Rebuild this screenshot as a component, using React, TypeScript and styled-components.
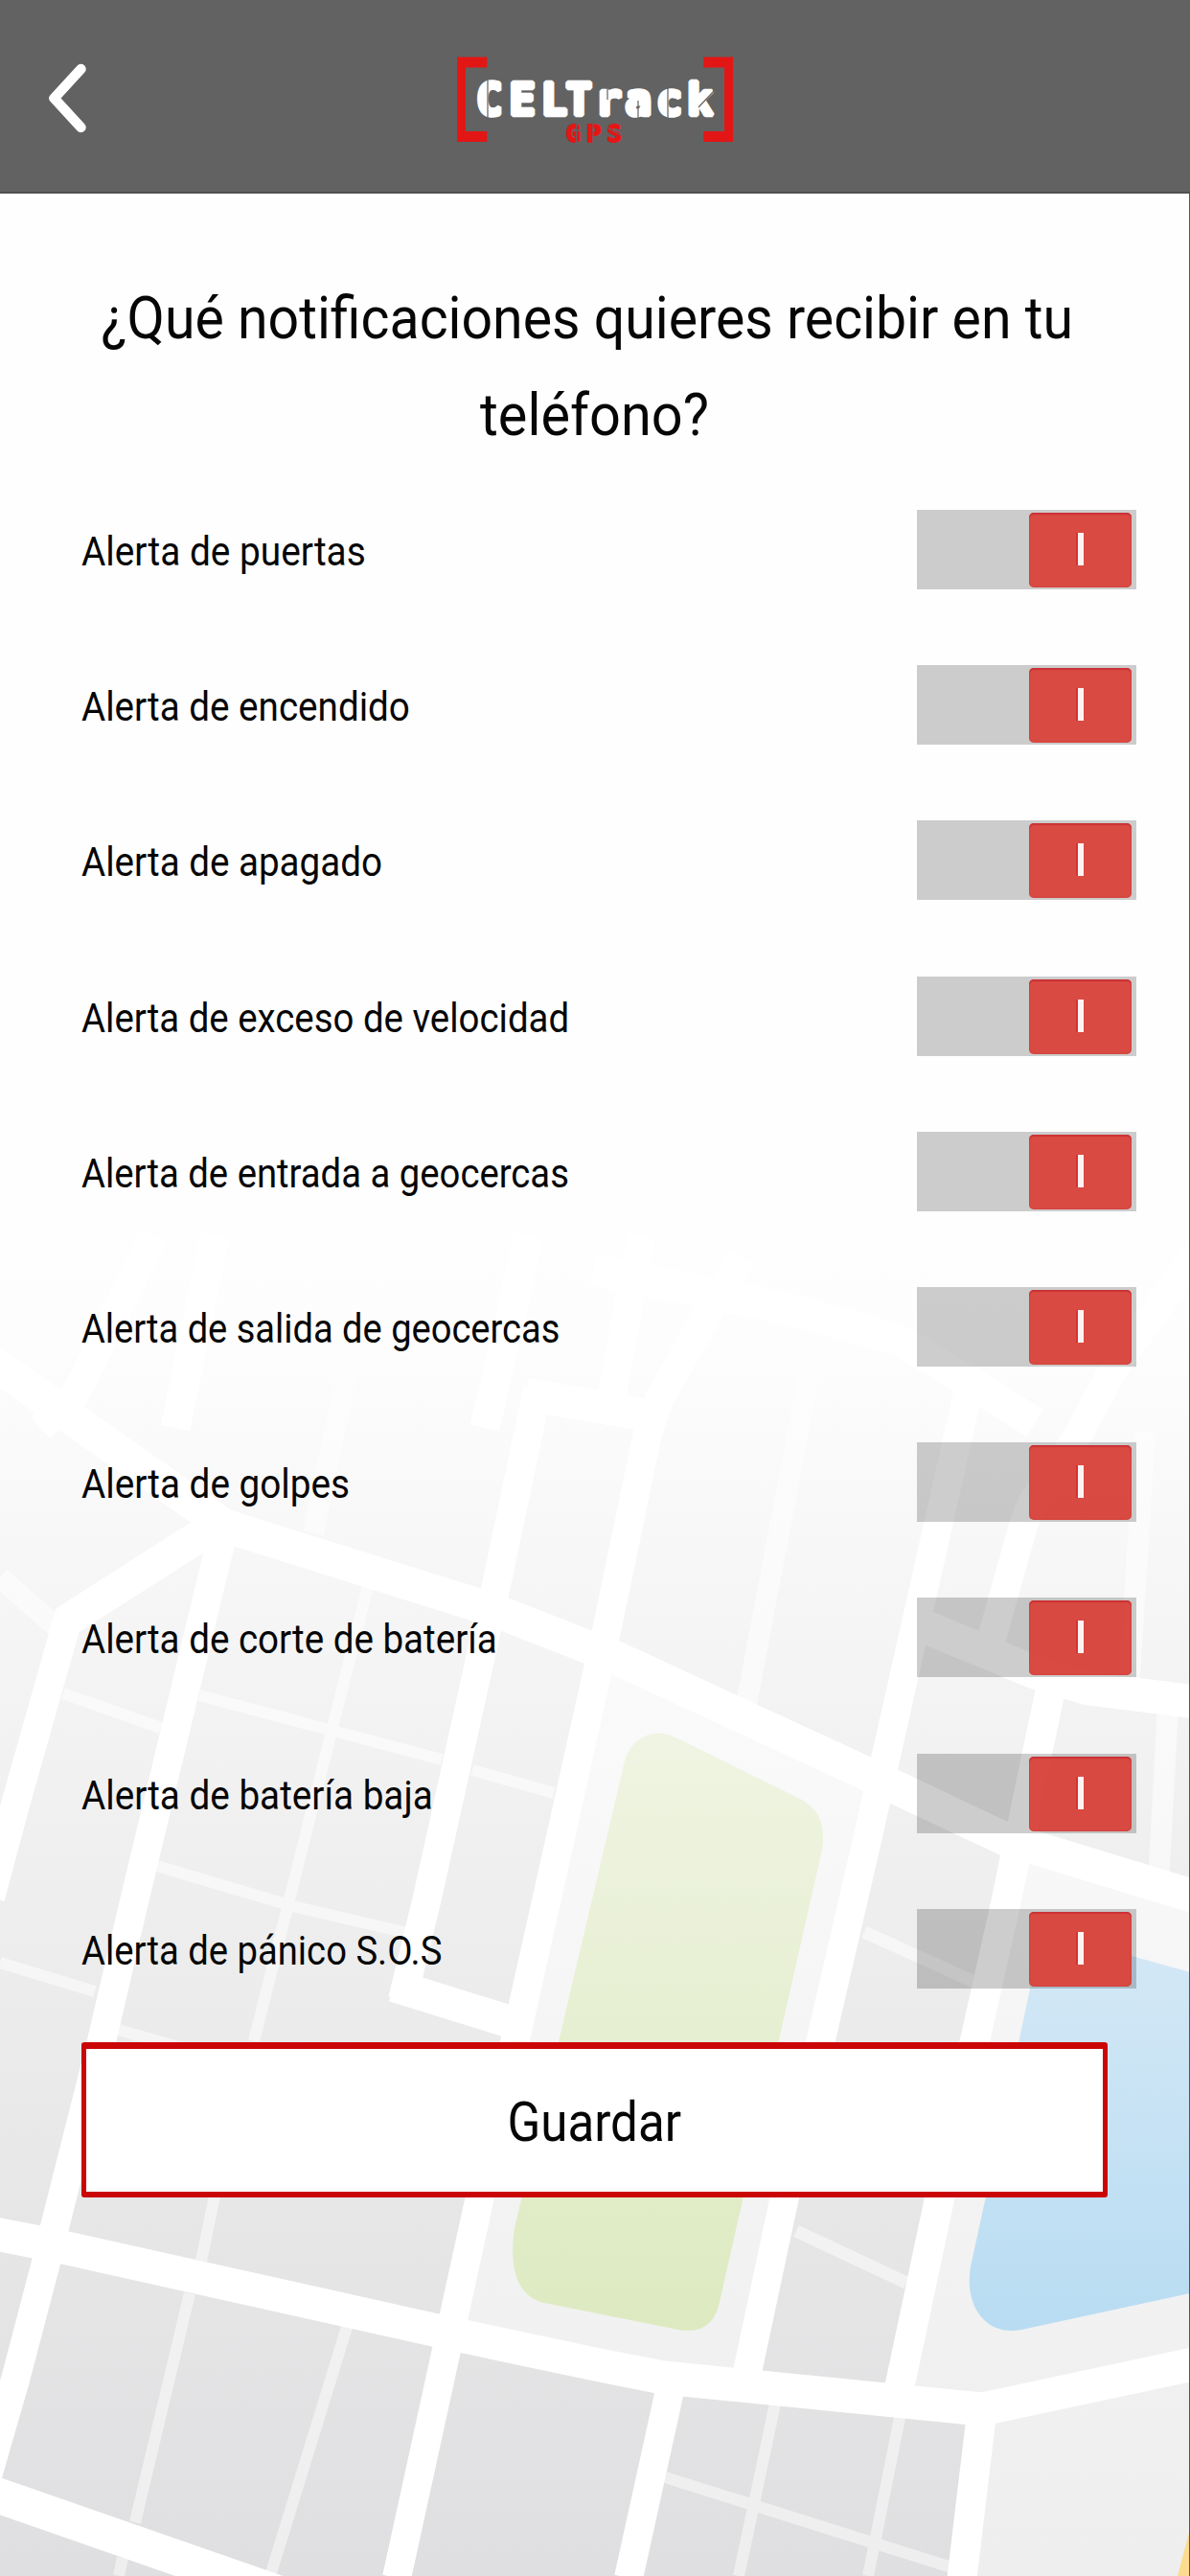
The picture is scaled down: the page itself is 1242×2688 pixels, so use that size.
import React, { useLayoutEffect, useRef, useState } from "react";
import styled, { createGlobalStyle } from "styled-components";

const GlobalStyle = createGlobalStyle`
  *, *::before, *::after { box-sizing: border-box; }
  html, body { margin: 0; padding: 0; background: #fff; }
  body { font-family: Roboto, "Open Sans", "Liberation Sans", sans-serif; color: #060606; }
`;

const Screen = styled.div`
  position: relative;
  width: 1242px;
  height: 2688px;
  overflow: hidden;
  background: #fefefe;
  display: flex;
  flex-direction: column;
`;

const MapBackdrop = styled.svg`
  position: absolute;
  inset: 0;
  width: 100%;
  height: 100%;
`;

const Header = styled.header`
  position: relative;
  flex: none;
  height: 202px;
  padding: 0 51px;
  display: grid;
  grid-template-columns: 60px 1fr 60px;
  align-items: center;
  background: #626262;
  border-bottom: 2px solid #505050;
`;

const BackButton = styled.button`
  width: 44px;
  height: 76px;
  margin-top: 6px;
  padding: 0;
  border: 0;
  background: none;
  display: flex;
`;

const Logo = styled.svg`
  justify-self: center;
  width: 290px;
  height: 112px;
  margin-top: 7px;
  overflow: visible;
`;

const Content = styled.main`
  position: relative;
  flex: 1;
  padding: 80px 55px 0 85px;
  border-right: 1px solid #555;
  display: flex;
  flex-direction: column;
`;

const Title = styled.h1`
  margin: 0 31px 0 0;
  height: 201px;
  font-size: 62px;
  font-weight: 400;
  line-height: 100.5px;
  display: flex;
  flex-direction: column;
  align-items: center;
`;

const TitleLine = styled.span<{ $trail?: number }>`
  padding-right: ${(p) => p.$trail ?? 0}px;
  white-space: nowrap;
`;

const List = styled.ul`
  list-style: none;
  margin: 49px 0 0;
  padding: 0;
`;

const Row = styled.li`
  height: 162.2px;
  display: flex;
  align-items: flex-start;
  justify-content: space-between;
`;

const RowLabel = styled.span`
  font-size: 43px;
  line-height: 86px;
  white-space: nowrap;
`;

const Fitted = styled.span<{ $origin: string }>`
  display: inline-block;
  white-space: nowrap;
  transform-origin: ${(p) => p.$origin} center;
`;

const Toggle = styled.button`
  width: 229px;
  height: 83px;
  padding: 3px 5px 2px 0;
  border: 0;
  display: flex;
  justify-content: flex-end;
  background: rgba(0, 0, 0, 0.197);
`;

const Thumb = styled.span`
  width: 107px;
  height: 78px;
  border-radius: 5px;
  background: rgba(217, 69, 61, 0.97);
  box-shadow: inset 0 2px 1px rgba(196, 38, 46, 0.65), inset 0 0 2px rgba(205, 60, 60, 0.8);
  display: flex;
  justify-content: center;
`;

const OnMark = styled.span`
  width: 6px;
  height: 34px;
  margin: 21px 0 0 1px;
  background: #fdf3f2;
  box-shadow: -2px 0 0 #d6322f;
`;

const SaveButton = styled.button`
  width: 1071px;
  height: 162px;
  margin: -23px 0 0;
  padding: 5px 0 0;
  border: solid #cb0606;
  border-width: 7px 5px 6px;
  border-radius: 3px;
  background: #fff;
  color: #060606;
  font: 400 57px Roboto, "Open Sans", sans-serif;
  display: flex;
  align-items: center;
  justify-content: center;
`;

type FitTextProps = { width: number; origin?: "left" | "center"; children: string };

/* Condenses a single line so that it spans the requested width. */
function FitText({ width, origin = "left", children }: FitTextProps) {
  const ref = useRef<HTMLSpanElement>(null);
  const [scale, setScale] = useState(1);
  useLayoutEffect(() => {
    if (ref.current) setScale(width / ref.current.offsetWidth);
  }, [width, children]);
  return (
    <Fitted ref={ref} $origin={origin} style={{ transform: `scaleX(${scale})` }}>
      {children}
    </Fitted>
  );
}

const alerts = [
  { label: "Alerta de puertas", width: 297 },
  { label: "Alerta de encendido", width: 343 },
  { label: "Alerta de apagado", width: 314 },
  { label: "Alerta de exceso de velocidad", width: 509 },
  { label: "Alerta de entrada a geocercas", width: 509 },
  { label: "Alerta de salida de geocercas", width: 499 },
  { label: "Alerta de golpes", width: 280 },
  { label: "Alerta de corte de batería", width: 434 },
  { label: "Alerta de batería baja", width: 367 },
  { label: "Alerta de pánico S.O.S", width: 376 },
];

const lanes: [string, number][] = [
  ["M66 1767L168 1803M208 1769L461 1836M493 1847L578 1871", 12],
  ["M384 1655L265 2130M224 2292L210 2359M198 2393L141 2632M128 2669L124 2688", 12],
  ["M164 1947L305 1989L430 2018M0 2048L99 2078M123 2118L190 2137", 12],
  ["M363 2425L282 2688", 12],
  ["M902 2016L1017 2068M831 2328L946 2382", 13],
  ["M809 2508L771 2688M940 2518L906 2688M694 2585L993 2679", 12],
  ["M0 1646L58 1697", 22],
  ["M366 1414L327 1600M853 1387L779 1778", 22],
  ["M1195 1494L1178 1765M1219 1780L1209 1965", 22],
];

const roads: [string, number][] = [
  ["M-10 1420L234 1592L515 1680L643 1730L905 1851L1047 1918L1250 1980", 35],
  ["M222 1594L67 1693", 34],
  ["M72 1685L16 1883L-10 1980", 30],
  ["M232 1602L141 1980L106 2130L57 2324L48 2361L16 2483L-14 2587", 30],
  ["M561 1450L515 1668L446 1980L420 2087", 30],
  ["M411 2072L540 2112", 34],
  ["M775 1312L748 1354L688 1460L676 1495L634 1697L571 1980L501 2292L466 2452L414 2690", 30],
  ["M669 1290L639 1455", 30],
  ["M549 1455L682 1478", 34],
  ["M620 1325L680 1337L819 1365L938 1398L1017 1445L1080 1485", 33],
  ["M1012 1445L905 1920L819 2292L780 2475", 30],
  ["M1262 1290L1163 1427L1122 1503L1076 1570L1068 1592L1032 1720", 30],
  ["M950 1691L1080 1745L1136 1762L1250 1776", 35],
  ["M1096 1765L1051 1980L981 2292L939 2490", 31],
  ["M-5 2331L57 2343L470 2435L621 2467L692 2481L1025 2514L1250 2466", 35],
  ["M-5 2603L400 2744", 37],
  ["M700 2490L656 2690", 30],
  ["M1025 2514L1004 2690", 31],
  ["M183 1490L224 1290M506 1490L552 1290", 31],
  ["M42 1490L79 1454L160 1290", 30],
];

function CityMap() {
  return (
    <MapBackdrop viewBox="0 0 1242 2688" aria-hidden="true">
      <defs>
        <linearGradient id="blocks" gradientUnits="userSpaceOnUse" x1="0" y1="1290" x2="0" y2="2688">
          <stop offset="0" stopColor="#fefefe" />
          <stop offset=".08" stopColor="#fdfdfd" />
          <stop offset=".16" stopColor="#fafafa" />
          <stop offset=".29" stopColor="#f5f5f5" />
          <stop offset=".5" stopColor="#eeeeee" />
          <stop offset=".75" stopColor="#e6e6e7" />
          <stop offset="1" stopColor="#dfdfe1" />
        </linearGradient>
        <linearGradient id="lots" gradientUnits="userSpaceOnUse" x1="0" y1="1290" x2="0" y2="2688">
          <stop offset="0" stopColor="#fefefe" />
          <stop offset=".4" stopColor="#f9f9f9" />
          <stop offset=".7" stopColor="#f3f3f3" />
          <stop offset="1" stopColor="#eeeeee" />
        </linearGradient>
        <linearGradient id="park" gradientUnits="userSpaceOnUse" x1="0" y1="1805" x2="0" y2="2435">
          <stop offset="0" stopColor="#f0f4e3" />
          <stop offset="1" stopColor="#ddeac0" />
        </linearGradient>
        <linearGradient id="lake" gradientUnits="userSpaceOnUse" x1="0" y1="2020" x2="0" y2="2435">
          <stop offset="0" stopColor="#d4e8f6" />
          <stop offset="1" stopColor="#b8dcf2" />
        </linearGradient>
      </defs>
      <rect y="1290" width="1242" height="1398" fill="url(#blocks)" />
      <g fill="url(#lots)">
        <path d="M621 1718L905 1851L780 2473L692 2481L470 2435L571 1980Z" />
        <path d="M1047 1918L1242 1978V2468L1025 2514L939 2488Z" />
        <path d="M1025 2514L1242 2468V2688H1005Z" />
      </g>
      <g fill="none" stroke="url(#lots)">
        {lanes.map(([d, w]) => (
          <path key={d} d={d} strokeWidth={w} />
        ))}
      </g>
      <g fill="none" stroke="#fff" strokeLinejoin="round">
        {roads.map(([d, w]) => (
          <path key={d} d={d} strokeWidth={w} />
        ))}
      </g>
      <path
        fill="url(#park)"
        d="M537 2325L651 1842C656 1816 678 1802 703 1812L835 1877C855 1888 862 1903 858 1930L751 2402C746 2425 733 2435 708 2431L568 2403C543 2397 530 2372 537 2325Z"
      />
      <path
        fill="url(#lake)"
        d="M1242 2058L1110 2021Q1087 2018 1080 2052L1029 2292L1013 2365C1006 2408 1030 2438 1066 2431L1242 2393Z"
      />
      <path fill="#fbdc8e" d="M1242 2639V2688H1229Z" />
    </MapBackdrop>
  );
}

export default function App() {
  return (
    <>
      <GlobalStyle />
      <Screen>
        <CityMap />
        <Header>
          <BackButton aria-label="Atrás">
            <svg width="44" height="76" viewBox="0 0 44 76" fill="none">
              <path d="M33.5 7L5.5 37.5L33.5 68" stroke="#fff" strokeWidth="10.5" strokeLinecap="round" strokeLinejoin="round" />
            </svg>
          </BackButton>
          <Logo viewBox="475 48 290 112">
            <path
              fill="#e31616"
              d="M476 59.5H507.3V70.5H485V137H507.3V148H476ZM764 59.5H733.3V70.5H755V137H733.3V148H764Z"
            />
            <text
              x="496 530.5 563.5 589.5 620.5 651.5 684 716"
              y="119.8"
              fill="#fff"
              stroke="#fff"
              strokeWidth="4.6"
              strokeLinejoin="bevel"
              fontFamily="'DejaVu Sans Mono', monospace"
              fontWeight="700"
              fontSize="45.5"
            >
              CELTrack
            </text>
            <text
              x="589.5 611 632.5"
              y="147.5"
              fill="#e31616"
              stroke="#e31616"
              strokeWidth="2"
              strokeLinejoin="bevel"
              fontFamily="'DejaVu Sans Mono', monospace"
              fontWeight="700"
              fontSize="25.5"
            >
              GPS
            </text>
            {/* stencil bridges */}
            <path
              d="M508 84V124M696 91V124M665 105V124M633 92V104M728 112L745 94"
              stroke="#626262"
              strokeWidth="1.2"
              fill="none"
            />
            <path d="M600.5 127V149M618 127V149M633 133L652 144" stroke="#626262" strokeWidth="1.2" fill="none" />
          </Logo>
        </Header>
        <Content>
          <Title>
            <TitleLine $trail={15}>
              <FitText width={1014} origin="center">¿Qué notificaciones quieres recibir en tu</FitText>
            </TitleLine>
            <TitleLine>
              <FitText width={239} origin="center">teléfono?</FitText>
            </TitleLine>
          </Title>
          <List>
            {alerts.map((a) => (
              <Row key={a.label}>
                <RowLabel>
                  <FitText width={a.width}>{a.label}</FitText>
                </RowLabel>
                <Toggle role="switch" aria-checked="true" aria-label={a.label}>
                  <Thumb>
                    <OnMark />
                  </Thumb>
                </Toggle>
              </Row>
            ))}
          </List>
          <SaveButton>
            <FitText width={182} origin="center">Guardar</FitText>
          </SaveButton>
        </Content>
      </Screen>
    </>
  );
}
